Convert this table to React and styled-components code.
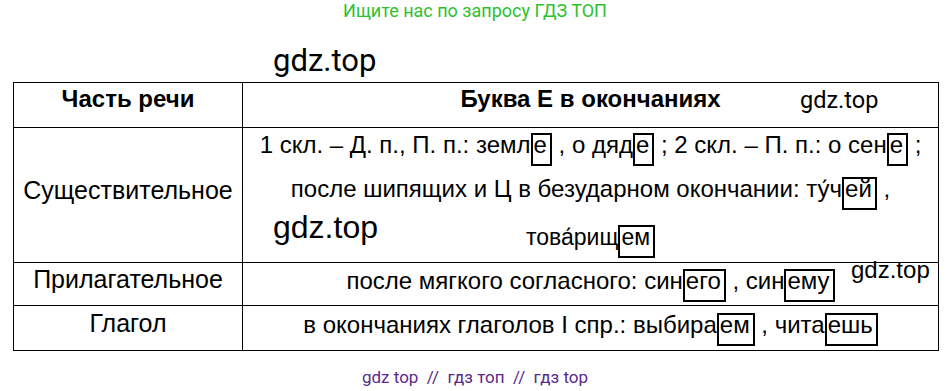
import React from "react";
import styled, { createGlobalStyle } from "styled-components";

const GlobalStyle = createGlobalStyle`
  html, body {
    margin: 0;
    padding: 0;
    background: #fff;
  }
  body {
    font-family: "Liberation Sans", Arial, sans-serif;
    color: #000;
  }
`;

const Page = styled.div`
  position: relative;
  width: 950px;
  height: 391px;
  display: flex;
  flex-direction: column;
  align-items: center;
  overflow: hidden;
`;

const Promo = styled.div`
  font-family: Roboto, "Liberation Sans", sans-serif;
  font-size: 18px;
  line-height: 22px;
  color: #2ec12e;
`;

const Table = styled.table`
  align-self: flex-start;
  margin: 60px 0 0 13px;
  width: 926px;
  border-collapse: collapse;
  table-layout: fixed;
`;

const Row = styled.tr`
  height: ${(p) => p.h}px;
`;

const Head = styled.th`
  border: 1px solid #000;
  padding: 0 0 12px;
  font-size: 24px;
  font-weight: 700;
  text-align: center;
  vertical-align: middle;
`;

const Part = styled.td`
  border: 1px solid #000;
  padding: 0 0 9px;
  font-size: 25px;
  text-align: center;
  vertical-align: middle;
`;

const Rule = styled.td`
  border: 1px solid #000;
  padding: 0;
  font-size: 24px;
  text-align: center;
  vertical-align: ${(p) => (p.top ? "top" : "middle")};
  white-space: nowrap;
`;

const Line = styled.div`
  line-height: ${(p) => p.lh}px;
  font-size: ${(p) => p.fs || 24}px;
`;

const Box = styled.span`
  display: inline-block;
  border: 2px solid #000;
  line-height: 20px;
  padding: 0 3px 9px 1px;
`;

const Mark = styled.div`
  position: absolute;
  left: ${(p) => p.x}px;
  top: ${(p) => p.y}px;
  font-family: ${(p) =>
    p.arial ? `"Liberation Sans", sans-serif` : `Roboto, "Liberation Sans", sans-serif`};
  font-size: ${(p) => p.fs}px;
  line-height: 1;
  color: #000;
  white-space: nowrap;
`;

const Footer = styled.div`
  margin-top: 16px;
  font-family: Roboto, "Liberation Sans", sans-serif;
  font-size: 17px;
  line-height: 20px;
  color: #5a2a8c;
  white-space: pre;
`;

export default function App() {
  return (
    <Page>
      <GlobalStyle />
      <Promo>Ищите нас по запросу ГДЗ ТОП</Promo>

      <Table>
        <colgroup>
          <col style={{ width: 229 }} />
          <col />
        </colgroup>
        <tbody>
          <Row h={45}>
            <Head>Часть речи</Head>
            <Head>Буква Е в окончаниях</Head>
          </Row>
          <Row h={131}>
            <Part>Существительное</Part>
            <Rule top>
              <Line lh={34}>
                1 скл. – Д. п., П. п.: земл<Box>е</Box> , о дяд<Box>е</Box> ; 2 скл. – П. п.: о сен
                <Box>е</Box> ;
              </Line>
              <Line lh={46}>
                после шипящих и Ц в безударном окончании: ту́ч<Box>ей</Box> ,
              </Line>
              <Line lh={50} fs={23}>
                това́рищ<Box>ем</Box>
              </Line>
            </Rule>
          </Row>
          <Row h={43}>
            <Part>Прилагательное</Part>
            <Rule>
              после мягкого согласного: син<Box>его</Box> , син<Box>ему</Box>
            </Rule>
          </Row>
          <Row h={45}>
            <Part>Глагол</Part>
            <Rule>
              в окончаниях глаголов I спр.: выбира<Box>ем</Box> , чита<Box>ешь</Box>
            </Rule>
          </Row>
        </tbody>
      </Table>

      <Footer>gdz top  //  гдз топ  //  гдз top</Footer>

      <Mark x={273} y={45} fs={31}>gdz.top</Mark>
      <Mark x={800} y={89} fs={23.5}>gdz.top</Mark>
      <Mark x={273} y={211} fs={32} arial>gdz.top</Mark>
      <Mark x={851} y={258} fs={24} arial>gdz.top</Mark>
    </Page>
  );
}
